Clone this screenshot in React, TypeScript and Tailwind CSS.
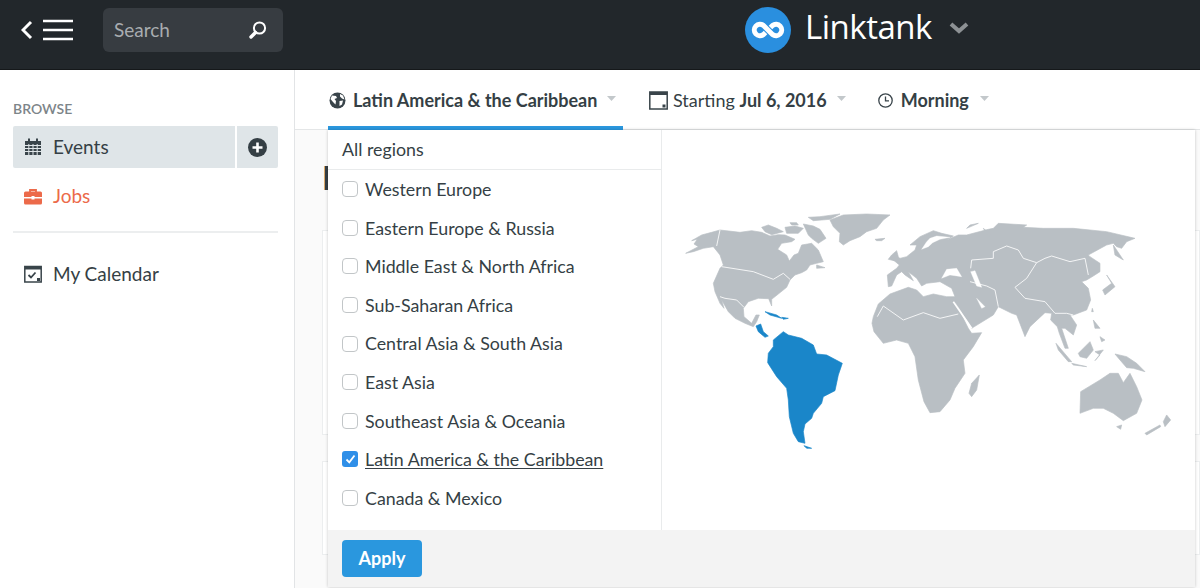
import React from 'react';

const regions = [
  'Western Europe',
  'Eastern Europe & Russia',
  'Middle East & North Africa',
  'Sub-Saharan Africa',
  'Central Asia & South Asia',
  'East Asia',
  'Southeast Asia & Oceania',
  'Latin America & the Caribbean',
  'Canada & Mexico',
];

const Caret = () => (
  <svg width="9" height="5" viewBox="0 0 9 5" className="shrink-0">
    <path d="M0 0h9L4.5 5z" fill="#c3c8cb" />
  </svg>
);

// traced from the picture, left half at 3x around (670,200), right half at 3x around (930,200)
const WorldMap = () => (
  <svg width="533" height="400" viewBox="662 130 533 400" className="block">
    <g transform="translate(670 200) scale(0.3333)" fill="#b9bfc4" stroke="#b9bfc4" strokeWidth="2" strokeLinejoin="round">
      <path d="M47 160L85 140L72 132L82 118L65 122L95 105L125 97L150 90L210 97L245 92L275 97L300 108L325 104L345 105L375 118L365 125L335 130L323 148L350 165L358 183L372 165L385 160L395 135L425 130L445 150L460 185L440 190L420 195L410 210L395 218L375 225L360 240L350 262L325 282L305 298L305 318L296 296L265 295L235 305L220 325L222 350L245 370L258 345L268 345L260 365L250 380L225 370L195 355L175 335L155 300L162 325L150 310L135 275L130 250L150 205L160 195L150 165L130 140L100 145L70 155Z" />
      <path d="M275 82L295 75L320 85L340 95L305 104L285 95ZM345 82L375 78L400 85L385 100L350 100ZM400 72L430 78L450 88L468 115L445 130L425 115L415 105ZM415 52L450 50L510 42L480 58L430 62ZM360 68L380 68L385 75L365 75Z" />
      <path d="M480 60L520 45L590 42L660 45L640 60L620 85L590 95L570 110L540 122L520 135L508 125L510 100L490 80Z" />
      <path d="M615 118L645 115L635 122L620 122ZM655 178L665 165L680 152L685 170L697 185L672 182ZM440 195L465 203L440 205Z" />
      <path d="M610 350L625 312L660 282L715 262L740 270L760 290L790 282L830 290L855 290L855 305L895 385L905 400L935 398L910 440L880 480L885 520L855 565L840 600L810 635L780 638L762 605L745 540L735 470L715 430L680 420L640 430L612 395L606 370Z" />
      <g fill="none" stroke="#fff" strokeWidth="2.5">
        <path d="M150 90L140 138M155 200L250 215L310 238L340 220L360 238M150 290L165 295L200 300L222 322" />
        <path d="M622 350L640 318L700 360L760 338L810 355L865 342" />
      </g>
      <g fill="#1a86c9" stroke="#1a86c9">
        <path d="M258 378L272 372L280 395L295 408L285 412L265 395Z" />
        <path d="M310 420L340 395L355 405L395 415L430 435L440 462L470 465L517 490L505 525L495 572L460 590L455 610L430 640L425 655L405 672L400 695L405 730L385 725L370 700L358 650L355 600L350 565L320 530L293 488L295 460L310 440Z" />
        <path d="M285 335L320 345L335 355L300 345ZM335 352L355 355L340 358ZM402 737L425 745L410 745Z" />
      </g>
    </g>
    <g transform="translate(930 200) scale(0.3333)" fill="#b9bfc4" stroke="#b9bfc4" strokeWidth="2" strokeLinejoin="round">
      <path d="M-125 260L-128 225L-100 205L-92 195L-110 180L-70 170L-45 150L-40 135L-60 135L-30 110L10 92L35 100L70 108L50 120L85 105L110 105L175 88L190 85L205 70L290 75L280 82L340 85L400 85L430 85L530 95L615 115L590 125L575 145L560 140L550 130L530 135L475 165L480 170L510 190L510 215L490 228L470 240L455 245L475 265L482 300L470 330L430 345L420 345L440 375L430 405L405 385L395 385L415 445L405 445L388 400L382 380L362 360L365 340L345 338L300 380L285 410L260 345L245 340L205 320L190 345L125 385L110 360L75 305L75 290L65 265L30 245L-10 250L-25 258L-40 235L-65 215L-50 242L-75 225L-85 215L-100 225L-115 258Z" />
      <path d="M110 85L145 70L120 75ZM160 85L185 105L175 110ZM550 135L580 180L555 165ZM530 225L555 260L525 285L518 270L545 250Z" />
      <path d="M555 462L590 470L620 490L645 515L610 505L590 503L570 480ZM445 460L480 425L490 450L470 475L450 470ZM378 430L425 485L415 485L385 450ZM425 490L470 500L430 495Z" />
      <path d="M495 482L520 450L495 455L510 465ZM490 360L510 385L495 385ZM510 410L525 420L515 425ZM487 325L490 335L485 335Z" />
      <path d="M148 525L140 570L125 590L117 580L125 550Z" />
      <path d="M450 640L452 575L510 540L540 520L565 520L580 548L600 520L620 560L636 600L620 640L580 662L550 640L520 625L490 625Z" />
      <path d="M560 680L575 675L572 688ZM645 700L690 675L692 680L650 705ZM700 665L710 645L722 660L705 680Z" />
      <g fill="#fff" stroke="#fff" strokeWidth="1">
        <path d="M35 235L50 208L80 205L95 230L60 225Z" />
        <path d="M122 215L135 212L155 262L140 258Z" />
        <path d="M140 295L165 320L155 325Z" />
        <path d="M-25 148L-10 125L0 115L20 108L60 112L30 118L8 128L-5 140Z" />
      </g>
      <g fill="none" stroke="#fff" strokeWidth="2.5">
        <path d="M122 205L125 180L190 175L190 155L230 138L265 150L280 175L320 188L345 175L365 168L420 185L465 175L475 225" />
        <path d="M320 188L290 235L255 262L285 295L345 305L375 340L410 340L430 345" />
        <path d="M120 245L170 258L195 270L205 320" />
        <path d="M70 305L125 385" strokeWidth="5" />
      </g>
    </g>
  </svg>
);

export default function App() {
  return (
    <div className="h-[588px] w-[1200px] flex flex-col overflow-hidden bg-white text-[#353f45] font-['Lato','Open_Sans',sans-serif]">
      {/* Top bar */}
      <header className="relative h-[70px] shrink-0 bg-[#22272b] border-b border-[#15181a] flex items-center pl-[21px] pb-[9px]">
        <svg width="53" height="22" viewBox="0 0 53 22">
          <path d="M10 3L2 11l8 8" fill="none" stroke="#fff" strokeWidth="3" />
          <path d="M22 2h30M22 11h30M22 20h30" stroke="#fff" strokeWidth="2.4" />
        </svg>
        <div className="ml-[29px] w-[180px] h-[44px] rounded-md bg-[#373c41] flex items-center justify-between pl-[11px] pr-[15px]">
          <span className="text-[19px] text-[#a9adb0]">Search</span>
          <svg width="20" height="20" viewBox="0 0 20 20">
            <circle cx="11.5" cy="8" r="5.6" fill="none" stroke="#fff" strokeWidth="2" />
            <path d="M7.5 12.5L3 17" stroke="#fff" strokeWidth="3.4" strokeLinecap="round" />
          </svg>
        </div>
        <div className="absolute left-[745px] top-[7px] flex items-center">
          <svg width="46" height="46" viewBox="0 0 46 46">
            <circle cx="23" cy="23" r="23" fill="#2a8fdf" />
            <path d="M23 23l-4.500-4.500a5.700 5.700 0 1 0 0 9l2-2M23 23l4.500 4.500a5.700 5.700 0 1 0 0-9l-2 2" fill="none" stroke="#fff" strokeWidth="5" strokeLinejoin="round" />
          </svg>
          <span className="ml-[14px] text-[33px] leading-none text-white font-['Open_Sans',sans-serif] tracking-[-0.5px] mb-[7px]">Linktank</span>
          <svg width="20" height="12" viewBox="0 0 20 12" className="ml-[17px] mb-[5px]">
            <path d="M2 2l8 7 8-7" fill="none" stroke="#8d9194" strokeWidth="4" />
          </svg>
        </div>
      </header>

      <div className="flex flex-1 min-h-0">
        {/* Sidebar */}
        <aside className="w-[295px] shrink-0 border-r border-[#e2e4e6] pl-[13px] pr-[16px] pt-[30px]">
          <div className="text-[14px] leading-[18px] font-semibold text-[#7d8589]">BROWSE</div>
          <div className="mt-[8px] flex h-[42px] gap-[2px]">
            <div className="flex-1 rounded-l-[2px] bg-[#dfe5e8] flex items-center pl-[11px] gap-[11px]">
              <svg width="18" height="18" viewBox="0 0 18 18">
                <path d="M1 3h16v14H1z" fill="#39444a" />
                <path d="M5 0.500v4M13 0.500v4" stroke="#39444a" strokeWidth="2" />
                <path d="M1 7.500h16M1 10.500h16M1 13.500h16M4.800 6v11M9 6v11M13.200 6v11" stroke="#dfe5e8" strokeWidth="1" />
              </svg>
              <span className="text-[19px] pt-[1px]">Events</span>
            </div>
            <div className="w-[41px] rounded-r-[2px] bg-[#dfe5e8] flex items-center justify-center">
              <svg width="19" height="19" viewBox="0 0 19 19">
                <circle cx="9.500" cy="9.500" r="9.500" fill="#353f45" />
                <path d="M9.500 4.500v10M4.500 9.500h10" stroke="#fff" strokeWidth="2.600" />
              </svg>
            </div>
          </div>
          <div className="mt-[7px] h-[42px] flex items-center pl-[11px] gap-[11px] text-[#ec6a4a]">
            <svg width="18" height="17" viewBox="0 0 18 17">
              <path d="M6 4V2h6v2" fill="none" stroke="#ec6a4a" strokeWidth="1.800" />
              <path d="M0 5a1.500 1.500 0 0 1 1.500-1.500h15A1.500 1.500 0 0 1 18 5v4H0zM0 10.500h18V15a1.500 1.500 0 0 1-1.500 1.500h-15A1.500 1.500 0 0 1 0 15z" fill="#ec6a4a" />
              <rect x="7.500" y="8" width="3" height="3.500" fill="#fff" />
            </svg>
            <span className="text-[19px]">Jobs</span>
          </div>
          <div className="mt-[14px] border-t-2 border-[#eceeef]" />
          <div className="mt-[20px] h-[42px] flex items-center pl-[11px] gap-[11px]">
            <svg width="18" height="18" viewBox="0 0 18 18">
              <rect x="0.800" y="1.500" width="16.400" height="15.500" fill="none" stroke="#39444a" strokeWidth="1.500" />
              <path d="M1 3h16" stroke="#39444a" strokeWidth="3" />
              <path d="M4.500 10l2.500 2.500 4.500-5" fill="none" stroke="#39444a" strokeWidth="1.800" />
              <rect x="13" y="13" width="3" height="3" fill="#39444a" />
            </svg>
            <span className="text-[19px]">My Calendar</span>
          </div>
        </aside>

        {/* Main */}
        <main className="relative flex-1 min-w-0 overflow-hidden bg-[#fafafa] flex flex-col">
          <nav className="h-[60px] shrink-0 bg-white border-b border-[#e4e6e7] flex pl-[33px] text-[18px]">
            <div className="w-[295px] h-[60px] border-b-4 border-[#2a97de] flex items-center pt-[4px] pl-[1px]">
              <svg width="17" height="17" viewBox="0 0 17 17">
                <circle cx="8.500" cy="8.500" r="8" fill="#39444a" />
                <path d="M3 3.500l4 .5 1 2-2.500 1 1.500 2-.5 3.500L4 10 1.500 7zM11 2l3 1.500 1.500 4-2.500-1-2-2zM10.500 9l3.500-.5-1 4-2.500 1.500z" fill="#fff" />
              </svg>
              <span className="ml-[7px] font-bold">Latin America &amp; the Caribbean</span>
              <span className="ml-[10px] mb-[3px]"><Caret /></span>
            </div>
            <div className="ml-[26px] flex items-center pt-[1px]">
              <svg width="19" height="19" viewBox="0 0 19 19">
                <rect x="0.800" y="1" width="17.400" height="17" fill="none" stroke="#39444a" strokeWidth="1.500" />
                <path d="M1 2.500h17" stroke="#39444a" strokeWidth="3" />
                <rect x="13.500" y="13.500" width="3" height="3" fill="#39444a" />
              </svg>
              <span className="ml-[5px]">Starting <span className="font-bold">Jul 6, 2016</span></span>
              <span className="ml-[10px] mb-[3px]"><Caret /></span>
            </div>
            <div className="ml-[32px] flex items-center pt-[1px]">
              <svg width="15" height="15" viewBox="0 0 15 15">
                <circle cx="7.500" cy="7.500" r="6.700" fill="none" stroke="#39444a" strokeWidth="1.300" />
                <path d="M7.500 3.500v4.300h3.500" fill="none" stroke="#39444a" strokeWidth="1.300" />
              </svg>
              <span className="ml-[8px] font-bold">Morning</span>
              <span className="ml-[11px] mb-[3px]"><Caret /></span>
            </div>
          </nav>

          {/* Page content mostly hidden behind the open dropdown */}
          <div className="pl-[27px] pt-[33px]">
            <div className="h-[30px] text-[32px] leading-[30px] font-bold">E</div>
            <div className="mt-[37px] h-[205px] bg-white border border-[#eceeef]" />
            <div className="mt-[26px] h-[94px] bg-white border border-[#eceeef]" />
          </div>

          {/* Region dropdown */}
          <div className="absolute left-[33px] top-[60px] w-[867px] h-[457px] bg-white shadow-[0_0_3px_rgba(0,0,0,0.22)] flex flex-col">
            <div className="flex flex-1 min-h-0">
              <div className="w-[334px] shrink-0 border-r border-[#e9ebec]">
                <div className="h-[40px] border-b border-[#e9ebec] flex items-center pl-[14px] text-[17.800px]">All regions</div>
                <ul>
                  {regions.map((r) => {
                    const on = r === 'Latin America & the Caribbean';
                    return (
                      <li key={r} className="h-[38.600px] flex items-center pl-[14px] text-[17.800px]">
                        {on ? (
                          <span className="w-[16px] h-[16px] rounded-[3px] bg-[#2f8fe8] flex items-center justify-center">
                            <svg width="11" height="10" viewBox="0 0 11 10">
                              <path d="M1.500 5.500l2.800 2.800L9.500 1.500" fill="none" stroke="#fff" strokeWidth="1.800" />
                            </svg>
                          </span>
                        ) : (
                          <span className="w-[16px] h-[16px] rounded-[4px] bg-white border border-[#c2c6c8]" />
                        )}
                        <span className={on ? 'ml-[7px] underline underline-offset-2' : 'ml-[7px]'}>{r}</span>
                      </li>
                    );
                  })}
                </ul>
              </div>
              <div className="flex-1 min-w-0">
                <WorldMap />
              </div>
            </div>
            <div className="h-[57px] shrink-0 bg-[#f3f3f3] pl-[14px] pt-[10px]">
              <button className="w-[80px] h-[37px] rounded-[4px] bg-[#2a97de] text-white text-[18px] font-bold">Apply</button>
            </div>
          </div>
        </main>
      </div>
    </div>
  );
}
